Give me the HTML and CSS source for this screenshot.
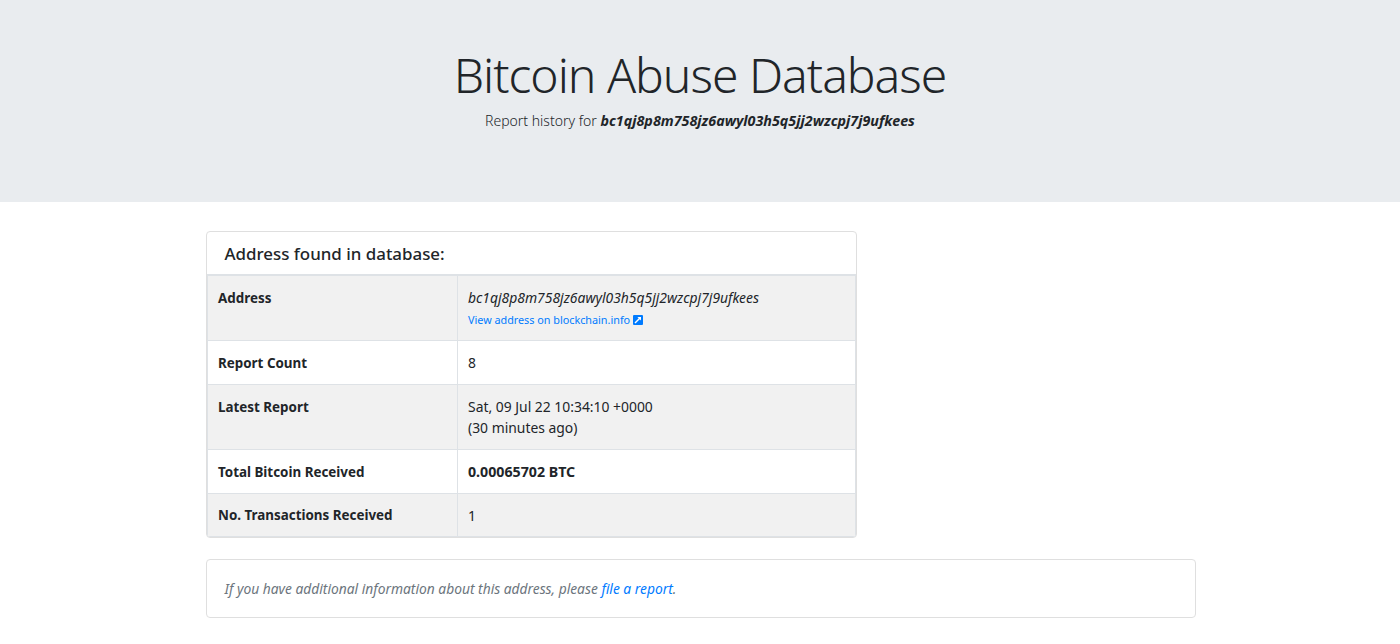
FILE: index.html
```html
<!DOCTYPE html>
<html lang="en">
  <head>
    <meta charset="UTF-8" />
    <title>Bitcoin Abuse Database</title>
    <link rel="stylesheet" href="styles.css">
  </head>
  <body>
    <div class="jumbotron">
      <h1>Bitcoin Abuse Database</h1>
      <p class="lead">Report history for <b><i>bc1qj8p8m758jz6awyl03h5q5jj2wzcpj7j9ufkees</i></b></p>
    </div>

    <div class="container">
      <div class="card card-table">
        <h5 class="card-header">Address found in database:</h5>
        <table class="table">
          <tr class="row-address">
            <th>Address</th>
            <td>
              <i>bc1qj8p8m758jz6awyl03h5q5jj2wzcpj7j9ufkees</i>
              <a class="small-link" href="#">View address on blockchain.info
                <svg class="ext-icon" viewBox="0 0 10 10" width="10" height="10">
                  <rect width="10" height="10" rx="1" fill="#007bff" />
                  <path d="M2 8 L7 3" stroke="#fff" stroke-width="1.5" />
                  <path d="M4.4 2 H8 V5.6 Z" fill="#fff" />
                </svg>
              </a>
            </td>
          </tr>
          <tr>
            <th>Report Count</th>
            <td>8</td>
          </tr>
          <tr class="row-latest">
            <th>Latest Report</th>
            <td>Sat, 09 Jul 22 10:34:10 +0000<br />(30 minutes ago)</td>
          </tr>
          <tr>
            <th>Total Bitcoin Received</th>
            <td><b>0.00065702 BTC</b></td>
          </tr>
          <tr class="row-last">
            <th>No. Transactions Received</th>
            <td>1</td>
          </tr>
        </table>
      </div>

      <div class="card card-note">
        <i>If you have additional information about this address, please <a href="#">file a report</a>.</i>
      </div>
    </div>
  </body>
</html>
```

FILE: styles.css
```css
/* Global styles */
* {
  box-sizing: border-box;
  margin: 0;
  padding: 0;
}

body {
  font-family: "Noto Sans", "Open Sans", sans-serif;
  font-size: 14px;
  line-height: 21px;
  color: #212529;
  background-color: #fff;
}

a {
  color: #007bff;
  text-decoration: none;
}

.jumbotron {
  height: 202px;
  padding-top: 45px;
  text-align: center;
  background-color: #e9ecef;
}

.jumbotron h1 {
  font-size: 48px;
  font-weight: 300;
  line-height: 60px;
  letter-spacing: -1px;
}

.lead {
  margin-top: 5px;
  font-size: 14px;
  font-weight: 300;
}

.lead b {
  font-size: 14.3px;
  font-weight: 700;
}

.container {
  width: 990px;
  margin: 29px 0 0 206px;
}

.card {
  background-color: #fff;
  border: 1px solid #dfdfdf;
  border-radius: 4px;
}

.card-table {
  width: 651px;
  overflow: hidden;
}

.card-header {
  height: 42px;
  padding-left: 17.5px;
  font-size: 16.9px;
  font-weight: 500;
  line-height: 44px;
}

.table {
  width: 100%;
  border-collapse: collapse;
  table-layout: fixed;
  border-top: 2px solid #dee2e6;
}

.table tr:nth-child(odd) {
  background-color: #f1f1f1;
}

.table th,
.table td {
  height: 44px;
  padding: 11px 10px 10px;
  font-size: 13.9px;
  text-align: left;
  vertical-align: top;
  border: 1px solid #dee2e6;
}

.table th {
  width: 250px;
  padding-top: 12px;
  padding-bottom: 9px;
  font-size: 13.4px;
  font-weight: 700;
}

.table td b {
  font-size: 14.2px;
}

.row-address th,
.row-address td {
  height: 65px;
}

.row-latest th,
.row-latest td {
  height: 65px;
}

.row-last th,
.row-last td {
  height: 43px;
}

.table .row-last th {
  padding-top: 11px;
}

.small-link {
  display: block;
  margin-top: 4px;
  font-size: 10.8px;
  line-height: 15px;
}

.ext-icon {
  vertical-align: -1px;
}

.card-note {
  height: 59px;
  margin-top: 21px;
  padding: 18px 17.5px;
  font-size: 13.8px;
  color: #6c757d;
}
```
